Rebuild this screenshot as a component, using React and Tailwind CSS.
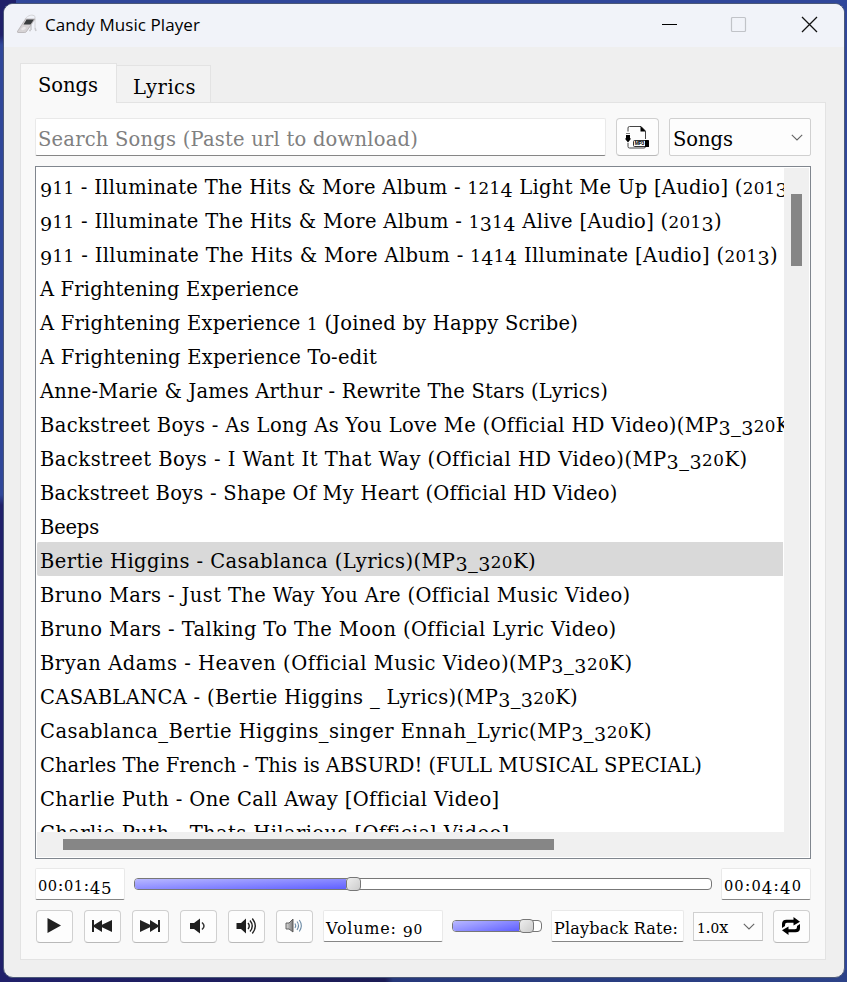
import { useLayoutEffect, useRef, useState } from "react";

const SONGS = [
  ["911 - Illuminate The Hits & More Album - 1214 Light Me Up [Audio] (2013)", 756],
  ["911 - Illuminate The Hits & More Album - 1314 Alive [Audio] (2013)", 682],
  ["911 - Illuminate The Hits & More Album - 1414 Illuminate [Audio] (2013)", 738],
  ["A Frightening Experience", 259],
  ["A Frightening Experience 1 (Joined by Happy Scribe)", 538],
  ["A Frightening Experience To-edit", 337],
  ["Anne-Marie & James Arthur - Rewrite The Stars (Lyrics)", 568],
  ["Backstreet Boys - As Long As You Love Me (Official HD Video)(MP3_320K)", 758],
  ["Backstreet Boys - I Want It That Way (Official HD Video)(MP3_320K)", 707],
  ["Backstreet Boys - Shape Of My Heart (Official HD Video)", 577],
  ["Beeps", 59],
  ["Bertie Higgins - Casablanca (Lyrics)(MP3_320K)", 496],
  ["Bruno Mars - Just The Way You Are (Official Music Video)", 590],
  ["Bruno Mars - Talking To The Moon (Official Lyric Video)", 576],
  ["Bryan Adams - Heaven (Official Music Video)(MP3_320K)", 592],
  ["CASABLANCA - (Bertie Higgins _ Lyrics)(MP3_320K)", 538],
  ["Casablanca_Bertie Higgins_singer Ennah_Lyric(MP3_320K)", 612],
  ["Charles The French - This is ABSURD! (FULL MUSICAL SPECIAL)", 662],
  ["Charlie Puth - One Call Away [Official Video]", 459],
  ["Charlie Puth - Thats Hilarious [Official Video]", 469],
];

const SELECTED = 11;

// Old-style figures: 0-2 stay at x-height, 3 4 5 7 9 hang below the baseline.
function figures(text) {
  return text.split(/([012]+|[34579]+)/).map((part, i) => {
    if (/^[012]/.test(part)) return <span key={i} className="text-[0.86em] leading-none">{part}</span>;
    if (/^[34579]/.test(part)) return <span key={i} className="align-[-0.17em] text-[0.98em] leading-none">{part}</span>;
    return part;
  });
}

// Spreads the letters so that the line takes the given width.
function Fit({ text, width, className = "" }) {
  const ref = useRef(null);
  const [spacing, setSpacing] = useState(0);
  useLayoutEffect(() => {
    const el = ref.current;
    el.style.letterSpacing = "0px";
    const next = (width - el.getBoundingClientRect().width) / text.length;
    el.style.letterSpacing = `${next}px`;
    setSpacing(next);
  }, [text, width]);
  return (
    <span ref={ref} className={`inline-block whitespace-pre ${className}`} style={{ letterSpacing: `${spacing}px` }}>
      {figures(text)}
    </span>
  );
}

function IconButton({ children, className = "h-[33px] w-[37px] pr-[2px] pb-[2px]" }) {
  return (
    <button className={`flex shrink-0 items-center justify-center rounded-[4px] border border-[#d0d0d0] border-b-[#b9b9b9] bg-[#fdfdfd] ${className}`}>
      {children}
    </button>
  );
}

function Field({ children, className }) {
  return (
    <div className={`flex shrink-0 items-center rounded-[2px] border border-[#e9e9e9] border-b-[#868686] bg-white ${className}`}>
      {children}
    </div>
  );
}

function Slider({ className, fill }) {
  return (
    <div className={`flex h-3 shrink-0 items-center rounded-[4px] border border-[#777] bg-white ${className}`}>
      <div className={`h-full rounded-l-[3px] ${fill}`} />
      <div className="-my-1 h-[14px] w-[15px] shrink-0 rounded-[4px] border border-[#777] bg-linear-to-br from-[#eee] to-[#ccc]" />
    </div>
  );
}

function Chevron() {
  return (
    <svg width="12" height="7" viewBox="0 0 12 7" fill="none" stroke="#666" strokeWidth="1.1">
      <path d="M.8.8 6 6 11.200.8" />
    </svg>
  );
}

function Ipod() {
  return (
    <svg width="20" height="20" viewBox="0 0 20 20">
      <path d="M8 5C11 1 16 0 18 2.500V14" fill="none" stroke="#d3d3d6" strokeWidth="1" />
      <path d="M14 11v5M12 16.500h2M18 14l1 3" fill="none" stroke="#cacace" strokeWidth="1.6" />
      <path d="M8.500 5H18L9.500 17.500Q9 18.500 7.500 18.500H1Q0 18.500 .6 17.200Z" fill="#d6d3d5" stroke="#aca7ab" strokeWidth=".7" />
      <path d="M9.500 5.500h7.500L13.500 10.500H6.500Z" fill="#3a3d3f" />
      <ellipse cx="6.500" cy="14.500" rx="2.500" ry="1.500" fill="#eae8ea" transform="rotate(-25 6.500 14.500)" />
    </svg>
  );
}

function Mp3Icon() {
  return (
    <svg width="24" height="24" viewBox="0 0 24 24">
      <path d="M3 6.500V3Q3 1.500 4.500 1.500H16L20.500 6V14M3 18v3.500Q3 23 4.500 23H19Q20.500 23 20.500 21.500" fill="none" stroke="#444" strokeWidth="1" />
      <path d="M15.500 1 20 5.500V6.500H15.500Z" fill="#000" />
      <path d="M1 8.500h4" stroke="#777" />
      <path d="M1 10h4v3.500h1.200L3 17.500-.2 13.500H1Z" fill="#000" />
      <rect x="8.500" y="15.500" width="14" height="6" rx="1" fill="#fff" stroke="#333" />
      <rect x="20" y="15" width="4" height="7" rx=".6" fill="#000" />
      <text x="9.800" y="20.400" fontSize="5" fontWeight="bold" fontFamily="Liberation Sans, sans-serif" textLength="9.500">MP3</text>
    </svg>
  );
}

function Transport({ kind }) {
  return (
    <svg width="22" height="16" viewBox="0 0 22 16" fill="#202020">
      {kind === "play" && <path d="M4.500 0 18 7.500 4.500 15Z" />}
      {kind === "prev" && <path d="M1 2h2v5l8-5v4.800L21 2v12l-10-4.800V14L3 9v5H1Z" />}
      {kind === "next" && <path d="M21 2h-2v5l-8-5v4.800L1 2v12l10-4.800V14L19 9v5H21Z" />}
    </svg>
  );
}

function Speaker({ kind }) {
  if (kind === "mute") {
    return (
      <svg width="20" height="16" viewBox="0 0 20 16">
        <defs>
          <linearGradient id="metal">
            <stop offset="0" stopColor="#ddd" />
            <stop offset="1" stopColor="#777" />
          </linearGradient>
        </defs>
        <path d="M2 5h3l4-4v13L5 11H2Z" fill="url(#metal)" stroke="#555" strokeWidth=".9" />
        <path d="M11 5.500q1.500 2.200 0 4.500M13 3.500q3 4 0 8.500M15.300 2q4 5.500 0 11.500" fill="none" stroke="#6c8ba5" strokeWidth="1.100" />
      </svg>
    );
  }
  return (
    <svg width="22" height="18" viewBox="0 0 22 18">
      <path d={kind === "low" ? "M3 6h4l6-4.500v15L7 12H3Z" : "M1.500 6h4.500l5-4.500v15L6 12H1.500Z"} fill="#202020" />
      {kind === "low" ? (
        <path d="M15 5.500q4 3.500 0 7" fill="none" stroke="#333" strokeWidth="1.500" />
      ) : (
        <path d="M13 6q2.500 3 0 6M15 3.500q4.500 5.500 0 11M17.300 1.500q6 7.500 0 15" fill="none" stroke="#222" strokeWidth="1.400" />
      )}
    </svg>
  );
}

function Repeat() {
  return (
    <svg width="20" height="18" viewBox="0 0 20 18" fill="#000">
      <path d="M12.500 0 19 4.800 12.500 8.500V5.800H6Q4 5.800 4 8V9L1 11V7Q1 2.700 5.500 2.700H12.500Z" />
      <path d="M7.500 18 1 13.200 7.500 9.500V12.200H14Q16 12.200 16 10V9L19 7V11Q19 15.300 14.500 15.300H7.500Z" />
    </svg>
  );
}

export default function App() {
  return (
    <div className="h-[982px] w-[847px] overflow-hidden font-['DejaVu_Serif',serif] text-[19.500px] text-black [background:linear-gradient(#20206a,#20206a)_0_0/16px_4px_no-repeat,linear-gradient(#20206a_0,#20206a_35px,#30479a_45px,#30479a_495px,#20206a_505px)_0_0/10px_100%_no-repeat,linear-gradient(90deg,#20206a,#1b1b55_385px,#26387a_393px,#2c4288)_0_100%/100%_12px_no-repeat,#30479a]">
      <div className="flex h-full w-full flex-col pt-[3px] pr-[2px] pb-1 pl-[3px]">
        <div className="flex h-[975px] w-[842px] flex-col overflow-hidden rounded-[10px] border border-[#4b5878] bg-[#efefef]">
          <header className="flex h-[43px] shrink-0 items-center bg-[#f1f3f9] pb-[3px] pl-[13px]">
            <Ipod />
            <span className="ml-2 pt-px font-['Open_Sans','Noto_Sans',sans-serif] text-[17px]">
              <Fit text="Candy Music Player" width={155} />
            </span>
            <svg className="ml-auto mr-[25px]" width="158" height="18" viewBox="0 0 158 18" fill="none">
              <path d="M1 9.500h15" stroke="#000" strokeWidth="1.100" />
              <rect x="70.500" y="2.500" width="14" height="14" rx="1" stroke="#c1c3c8" strokeWidth="1.200" />
              <path d="m141 2 15 15M156 2l-15 15" stroke="#111" strokeWidth="1.300" />
            </svg>
          </header>

          <nav className="flex h-[55px] shrink-0 items-end pl-4">
            <div className="z-10 -mb-px flex h-10 w-[97px] items-center border border-b-0 border-[#e3e3e3] bg-[#f9f9f9] pt-1 pl-[17px]">
              <Fit text="Songs" width={60} />
            </div>
            <div className="flex h-[37px] w-[94px] items-center border border-b-0 border-l-0 border-[#e3e3e3] bg-[#f2f2f2] pt-2 pl-4">
              <Fit text="Lyrics" width={63} />
            </div>
          </nav>

          <main className="ml-4 flex h-[858px] w-[806px] shrink-0 flex-col border border-[#e3e3e3] bg-[#f9f9f9] px-[14px] pt-[15px]">
            <div className="flex h-[38px] shrink-0">
              <Field className="h-[38px] w-[571px] pt-[6px] pl-[2px] text-[#808080]">
                <Fit text="Search Songs (Paste url to download)" width={380} />
              </Field>
              <IconButton className="ml-[10px] h-[38px] w-[43px] pr-px">
                <Mp3Icon />
              </IconButton>
              <div className="ml-[10px] flex w-[142px] items-center justify-between rounded-[2px] border border-[#d0d0d0] bg-[#fdfdfd] pt-[5px] pr-[7px] pl-[3px]">
                <Fit text="Songs" width={60} />
                <div className="pb-[5px]"><Chevron /></div>
              </div>
            </div>

            <div className="mt-[10px] flex h-[693px] w-[776px] shrink-0 flex-col border border-[#80868e] bg-white p-px">
              <div className="flex h-[664px]">
                <ul className="w-[747px] overflow-hidden pr-px">
                  {SONGS.map(([title, width], i) => (
                    <li key={title} className={`flex h-[34px] items-center pt-[5px] pl-[3px] ${i === SELECTED ? "rounded-l-[2px] bg-[#d9d9d9]" : ""}`}>
                      <Fit text={title} width={width} className="shrink-0 leading-[30px]" />
                    </li>
                  ))}
                </ul>
                <div className="flex-1 bg-[#f0f0f0] pt-[26px] pl-[7px]">
                  <div className="h-[72px] w-[11px] bg-[#868686]" />
                </div>
              </div>
              <div className="flex-1 bg-[#f0f0f0] pt-[7px] pl-[26px]">
                <div className="h-[11px] w-[491px] bg-[#868686]" />
              </div>
            </div>

            <div className="mt-[9px] flex h-8 shrink-0 items-start">
              <Field className="h-8 w-[90px] pt-[3px] pl-[2px] text-[17px]">
                <Fit text="00:01:45" width={74} />
              </Field>
              <Slider className="mt-[10px] ml-[9px] w-[578px]" fill="w-[211px] bg-[linear-gradient(177deg,#b8b8ff,#6060ff)]" />
              <Field className="ml-[9px] h-8 w-[90px] pt-[3px] pl-[2px] text-[17px]">
                <Fit text="00:04:40" width={78} />
              </Field>
            </div>

            <div className="mt-[10px] flex h-[33px] shrink-0 items-start pl-px">
              <div className="flex gap-[11px]">
                <IconButton><Transport kind="play" /></IconButton>
                <IconButton><Transport kind="prev" /></IconButton>
                <IconButton><Transport kind="next" /></IconButton>
                <IconButton><Speaker kind="low" /></IconButton>
                <IconButton><Speaker kind="high" /></IconButton>
                <IconButton><Speaker kind="mute" /></IconButton>
              </div>
              <Field className="ml-[10px] h-8 w-[120px] pt-[5px] pl-[2px] text-[16px]">
                <Fit text="Volume: 90" width={97} />
              </Field>
              <Slider className="mt-[10px] ml-[9px] w-[90px]" fill="w-[66px] bg-[linear-gradient(168deg,#b8b8ff,#6060ff)]" />
              <Field className="ml-[9px] h-8 w-[133px] pt-[5px] pl-[2px] text-[16px]">
                <Fit text="Playback Rate:" width={124} />
              </Field>
              <div className="mt-[2px] ml-[9px] flex h-[29px] w-[70px] shrink-0 items-center justify-between border border-[#d0d0d0] border-b-[#b9b9b9] bg-[#fdfdfd] pr-[7px] pl-[3px] text-[16px]">
                <div className="pt-[2px]"><Fit text="1.0x" width={31} /></div>
                <Chevron />
              </div>
              <div className="ml-[10px]">
                <IconButton><Repeat /></IconButton>
              </div>
            </div>
          </main>
        </div>
      </div>
    </div>
  );
}
